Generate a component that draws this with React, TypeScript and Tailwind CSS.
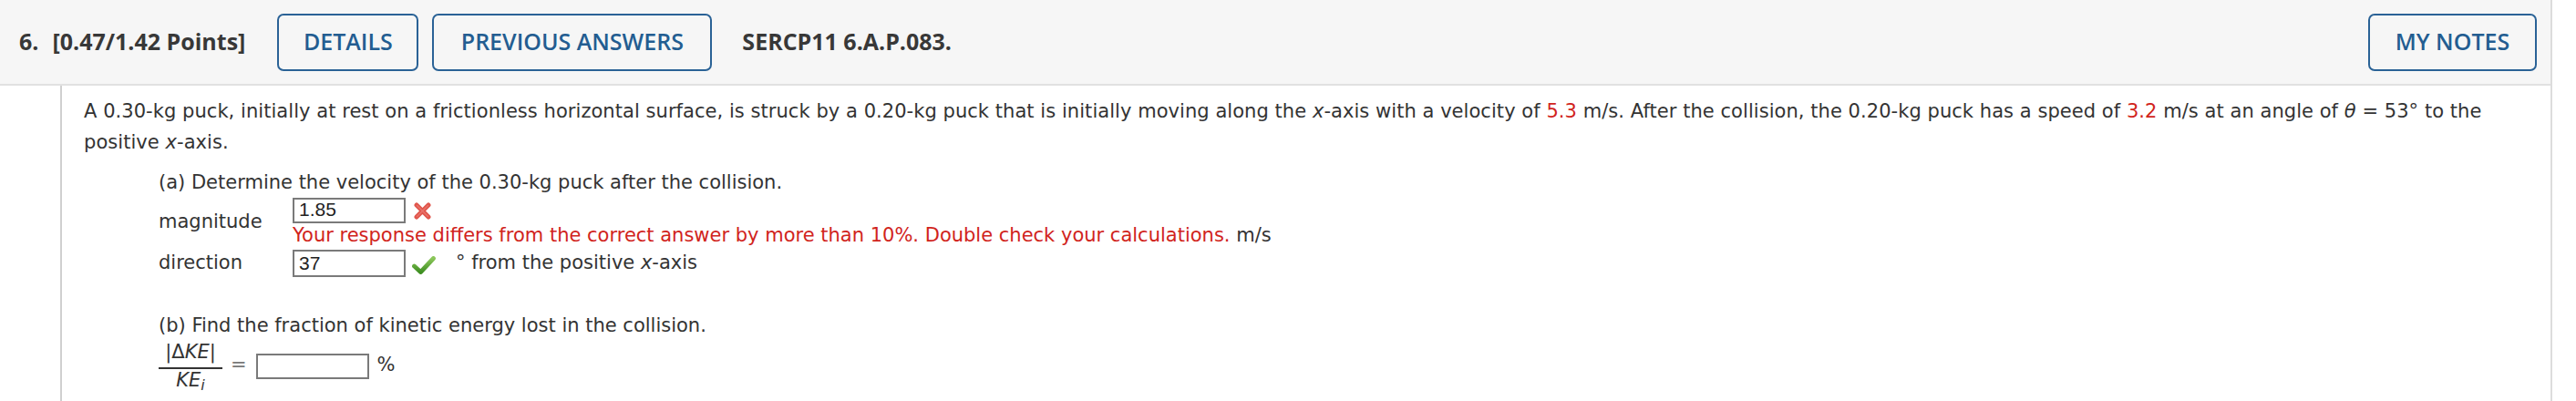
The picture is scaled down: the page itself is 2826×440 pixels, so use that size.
import React from "react";

const RedX = () => (
  <svg width="21" height="19" viewBox="0 0 21 19" className="block">
    <path d="M4 3 L17 16 M17 3 L4 16" stroke="#e0564c" strokeWidth="5" strokeLinecap="round" />
    <path d="M4.5 3.5 L16.5 15.5 M16.5 3.5 L4.5 15.5" stroke="#ef8a82" strokeWidth="1.4" strokeLinecap="round" opacity="0.6" />
  </svg>
);

const Check = () => (
  <svg width="26" height="20" viewBox="0 0 26 20" className="block">
    <defs>
      <linearGradient id="g" x1="0" y1="0" x2="0" y2="1">
        <stop offset="0" stopColor="#8bc65a" />
        <stop offset="1" stopColor="#3f8f22" />
      </linearGradient>
    </defs>
    <path d="M2.5 11 L9.5 17.5 L23.5 2.5" fill="none" stroke="url(#g)" strokeWidth="4.8" strokeLinecap="round" strokeLinejoin="round" />
  </svg>
);

const Btn = ({ children, w }: { children: React.ReactNode; w: string }) => (
  <div
    className={`${w} h-[63px] shrink-0 rounded-[7px] border-2 border-[#2a6296] flex items-center justify-center text-[#235d91] text-[25px] font-semibold`}
    style={{ fontFamily: '"Open Sans", sans-serif' }}
  >
    {children}
  </div>
);

export default function App() {
  const body = { fontFamily: '"DejaVu Sans", Verdana, sans-serif' };
  const inputFont = { fontFamily: '"Liberation Sans", Arial, sans-serif' };
  return (
    <div className="w-[2826px] h-[440px] bg-white overflow-hidden">
      <div className="w-[2800px] h-full border-r-2 border-[#dcdcdc] flex flex-col">
        <div
          className="h-[94px] shrink-0 bg-[#f6f6f6] border-b-2 border-[#e1e1e1] flex items-center pl-[21px] pr-[15px] text-[#383838]"
          style={{ fontFamily: '"Open Sans", sans-serif' }}
        >
          <span className="text-[25px] font-bold">6.</span>
          <span className="text-[25px] font-bold ml-[15px]">[0.47/1.42 Points]</span>
          <div className="ml-[35px] flex gap-[15px]">
            <Btn w="w-[155px]">DETAILS</Btn>
            <Btn w="w-[307px]">PREVIOUS ANSWERS</Btn>
          </div>
          <span className="text-[25px] font-bold ml-[33px]">SERCP11 6.A.P.083.</span>
          <div className="ml-auto">
            <Btn w="w-[185px]">MY NOTES</Btn>
          </div>
        </div>
        <div className="flex-1 flex">
          <div className="w-[66px] shrink-0" />
          <div
            className="flex-1 border-l-2 border-[#d0d0d0] pl-[24px] pr-[20px] pt-[11px] text-[21px] text-[#333]"
            style={body}
          >
            <p className="leading-[34px] tracking-[0.05px]">
              A 0.30-kg puck, initially at rest on a frictionless horizontal surface, is struck by a 0.20-kg puck that
              is initially moving along the <i>x</i>-axis with a velocity of{" "}
              <span className="text-[#d1241c]">5.3</span> m/s. After the collision, the 0.20-kg puck has a speed of{" "}
              <span className="text-[#d1241c]">3.2</span> m/s at an angle of <i>θ</i> = 53° to the positive{" "}
              <i>x</i>-axis.
            </p>

            <div className="ml-[82px] mt-[10px]">
              <p className="leading-[34px]">(a) Determine the velocity of the 0.30-kg puck after the collision.</p>
              <div className="flex items-center">
                <div className="w-[147px] shrink-0">magnitude</div>
                <div className="flex flex-col">
                  <div className="flex items-center">
                    <div
                      className="w-[124px] h-[28px] border-2 border-[#7a7a7a] pl-[5px] text-[21px] leading-[21px] text-[#222]"
                      style={inputFont}
                    >
                      1.85
                    </div>
                    <div className="ml-[8px]">
                      <RedX />
                    </div>
                  </div>
                  <div className="leading-[26px] whitespace-nowrap">
                    <span className="text-[#d1241c]">
                      Your response differs from the correct answer by more than 10%. Double check your calculations.
                    </span>{" "}
                    m/s
                  </div>
                </div>
              </div>
              <div className="flex items-center mt-[2px]">
                <div className="w-[147px] shrink-0">direction</div>
                <div
                  className="w-[124px] h-[30px] border-2 border-[#7a7a7a] pl-[5px] text-[21px] leading-[26px] text-[#222]"
                  style={inputFont}
                >
                  37
                </div>
                <div className="ml-[7px] mt-[4px]">
                  <Check />
                </div>
                <div className="ml-[22px] whitespace-nowrap">
                  ° from the positive <i>x</i>-axis
                </div>
              </div>

              <p className="leading-[34px] mt-[35px]">(b) Find the fraction of kinetic energy lost in the collision.</p>
              <div className="flex items-center">
                <div className="flex flex-col items-stretch w-[70px]">
                  <div className="leading-[24px] pb-[5px] text-center whitespace-nowrap">
                    |Δ<i>KE</i>|
                  </div>
                  <div className="h-[2px] bg-[#333]" />
                  <div className="leading-[24px] text-center whitespace-nowrap">
                    <i>KE</i>
                    <sub className="text-[16px] italic relative top-[4px]">i</sub>
                  </div>
                </div>
                <div className="ml-[9px] text-[#777]">=</div>
                <div className="ml-[10px] mt-[2px] w-[124px] h-[28px] border-2 border-[#7a7a7a]" />
                <div className="ml-[9px]">%</div>
              </div>
            </div>
          </div>
        </div>
      </div>
    </div>
  );
}
